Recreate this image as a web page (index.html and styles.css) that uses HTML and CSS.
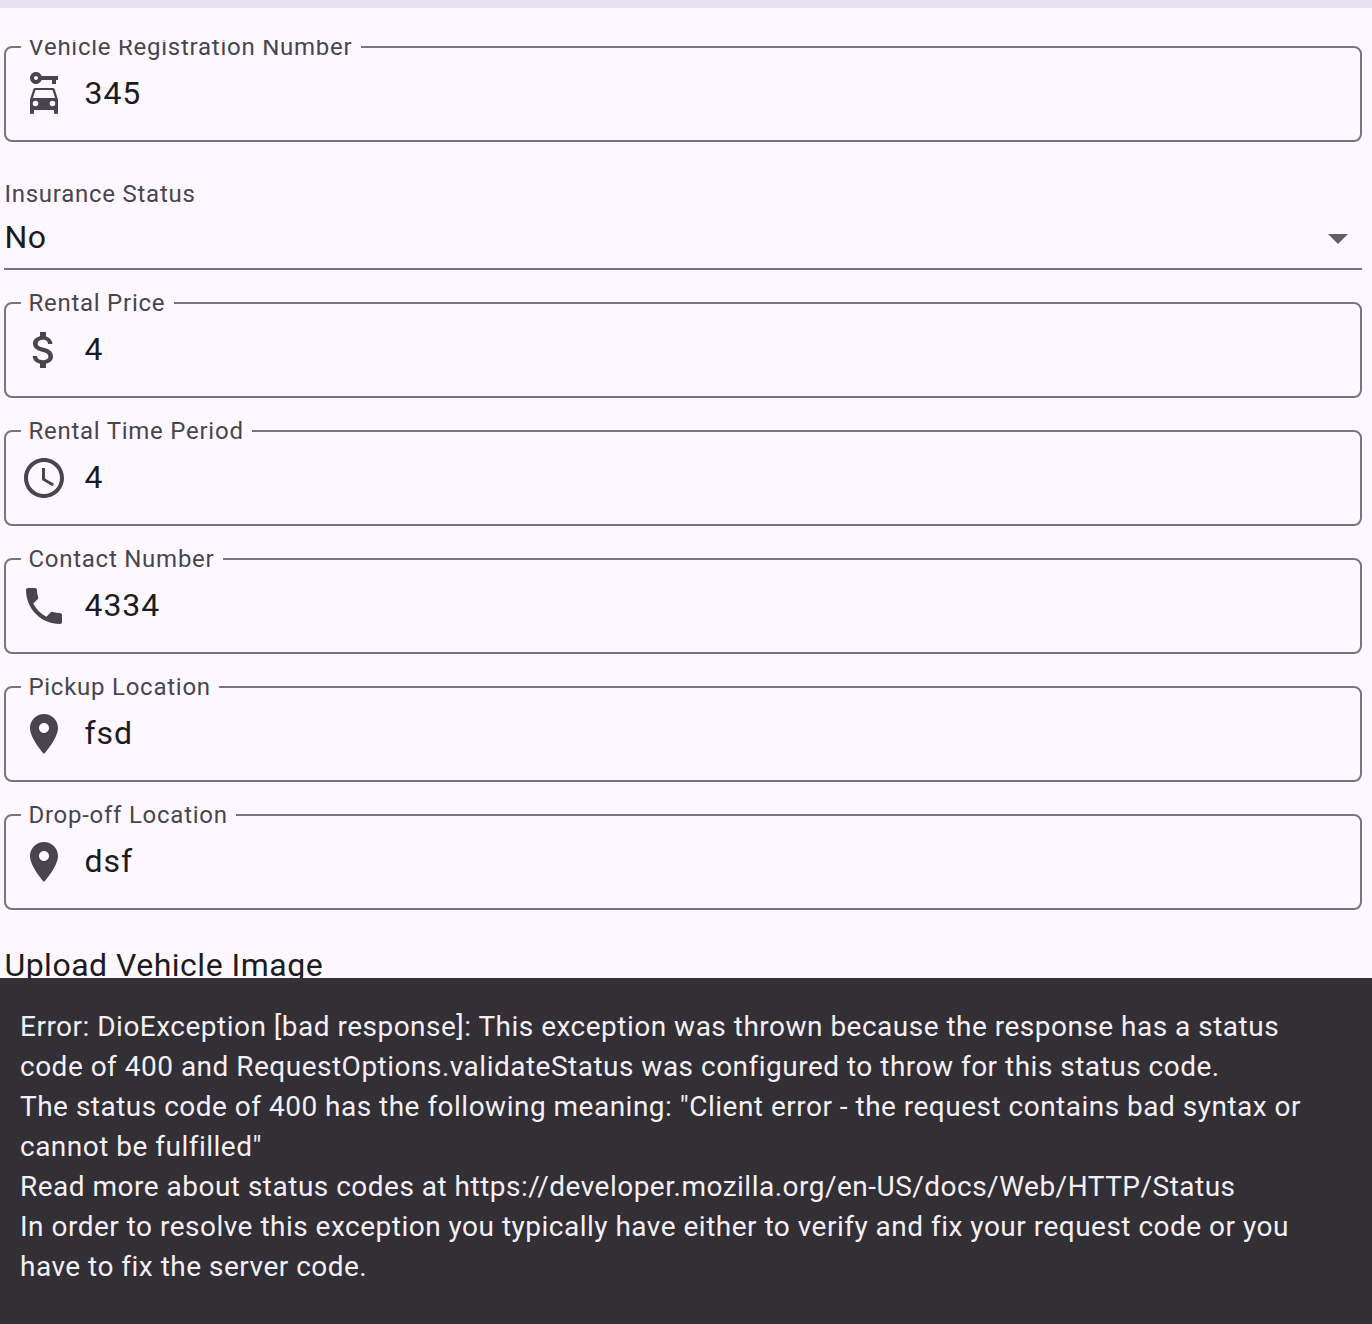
FILE: index.html
```html
<!DOCTYPE html>
<html lang="en">
<head>
<meta charset="utf-8">
<title>Vehicle Rental Form</title>
<link rel="stylesheet" href="styles.css">
</head>
<body>
<div class="app-bar-edge"></div>
<main class="form-viewport">
  <form class="form">
    <fieldset class="field">
      <legend>Vehicle Registration Number</legend>
      <div class="field-row">
        <svg class="icon" viewBox="0 0 24 24"><path fill-rule="evenodd" d="M10.83 3C10.41 1.83 9.3 1 8 1 6.34 1 5 2.34 5 4c0 1.65 1.34 3 3 3 1.3 0 2.41-.84 2.83-2H16v2h2V5h1V3h-8.17zM8 5c-.55 0-1-.45-1-1s.45-1 1-1 1 .45 1 1-.45 1-1 1zM16.39 9H7.61c-.43 0-.81.28-.95.68L5 14.69v6.5c0 .45.35.81.78.81h.44c.43 0 .78-.36.78-.81V20h10v1.19c0 .44.34.81.78.81h.44c.43 0 .78-.36.78-.81v-6.5l-1.66-5.01c-.14-.4-.52-.68-.95-.68zM7.78 10h8.44l1.34 4H6.44l1.34-4zM7.75 18.15a1.4 1.4 0 1 1 0-2.8a1.4 1.4 0 1 1 0 2.8zM16.25 18.15a1.4 1.4 0 1 1 0-2.8a1.4 1.4 0 1 1 0 2.8z"/></svg>
        <span class="value">345</span>
      </div>
    </fieldset>
    <div class="dropdown">
      <span class="dropdown-label">Insurance Status</span>
      <div class="dropdown-row">
        <span class="value">No</span>
        <svg class="icon icon-arrow" viewBox="0 0 24 24"><path d="M7 10l5 5 5-5z"/></svg>
      </div>
    </div>
    <fieldset class="field">
      <legend>Rental Price</legend>
      <div class="field-row">
        <svg class="icon" viewBox="0 0 24 24"><path d="M11.8 10.9c-2.27-.59-3-1.2-3-2.15 0-1.09 1.01-1.85 2.7-1.85 1.78 0 2.44.85 2.5 2.1h2.21c-.07-1.72-1.12-3.3-3.21-3.81V3h-3v2.16c-1.94.42-3.5 1.68-3.5 3.61 0 2.31 1.91 3.46 4.7 4.13 2.5.6 3 1.48 3 2.41 0 .69-.49 1.79-2.7 1.79-2.06 0-2.87-.92-2.98-2.1h-2.2c.12 2.19 1.76 3.42 3.68 3.83V21h3v-2.15c1.95-.37 3.5-1.5 3.5-3.55 0-2.84-2.43-3.81-4.7-4.4z"/></svg>
        <span class="value">4</span>
      </div>
    </fieldset>
    <fieldset class="field">
      <legend>Rental Time Period</legend>
      <div class="field-row">
        <svg class="icon" viewBox="0 0 24 24"><path d="M11.99 2C6.47 2 2 6.48 2 12s4.47 10 9.99 10C17.52 22 22 17.52 22 12S17.52 2 11.99 2zM12 20c-4.42 0-8-3.58-8-8s3.58-8 8-8 8 3.58 8 8-3.58 8-8 8zm.5-13H11v6l5.25 3.15.75-1.23-4.5-2.67z"/></svg>
        <span class="value">4</span>
      </div>
    </fieldset>
    <fieldset class="field">
      <legend>Contact Number</legend>
      <div class="field-row">
        <svg class="icon" viewBox="0 0 24 24"><path d="M6.62 10.79c1.44 2.83 3.76 5.14 6.59 6.59l2.2-2.2c.27-.27.67-.36 1.02-.24 1.12.37 2.33.57 3.57.57.55 0 1 .45 1 1V20c0 .55-.45 1-1 1-9.39 0-17-7.61-17-17 0-.55.45-1 1-1h3.5c.55 0 1 .45 1 1 0 1.25.2 2.45.57 3.57.11.35.03.74-.25 1.02l-2.2 2.2z"/></svg>
        <span class="value">4334</span>
      </div>
    </fieldset>
    <fieldset class="field">
      <legend>Pickup Location</legend>
      <div class="field-row">
        <svg class="icon" viewBox="0 0 24 24"><path d="M12 2C8.13 2 5 5.13 5 9c0 5.25 7 13 7 13s7-7.75 7-13c0-3.87-3.13-7-7-7zm0 9.5c-1.38 0-2.5-1.12-2.5-2.5s1.12-2.5 2.5-2.5 2.5 1.12 2.5 2.5-1.12 2.5-2.5 2.5z"/></svg>
        <span class="value">fsd</span>
      </div>
    </fieldset>
    <fieldset class="field">
      <legend>Drop-off Location</legend>
      <div class="field-row">
        <svg class="icon" viewBox="0 0 24 24"><path d="M12 2C8.13 2 5 5.13 5 9c0 5.25 7 13 7 13s7-7.75 7-13c0-3.87-3.13-7-7-7zm0 9.5c-1.38 0-2.5-1.12-2.5-2.5s1.12-2.5 2.5-2.5 2.5 1.12 2.5 2.5-1.12 2.5-2.5 2.5z"/></svg>
        <span class="value">dsf</span>
      </div>
    </fieldset>
    <div class="upload-title">Upload Vehicle Image</div>
  </form>
</main>
<div class="snackbar" role="alert">
  <p>Error: DioException [bad response]: This exception was thrown because the response has a status<br>code of 400 and RequestOptions.validateStatus was configured to throw for this status code.</p>
  <p>The status code of 400 has the following meaning: "Client error - the request contains bad syntax or<br>cannot be fulfilled"</p>
  <p>Read more about status codes at https://developer.mozilla.org/en-US/docs/Web/HTTP/Status</p>
  <p>In order to resolve this exception you typically have either to verify and fix your request code or you<br>have to fix the server code.</p>
</div>
</body>
</html>
```
FILE: styles.css
```css
* { box-sizing: border-box; }

body {
  margin: 0;
  height: 1324px;
  display: flex;
  flex-direction: column;
  overflow: hidden;
  background: #fdf8ff;
  color: #1c1b20;
  font-family: Roboto, "Liberation Sans", sans-serif;
  font-size: 32px;
  letter-spacing: 1px;
}

.app-bar-edge {
  flex: none;
  height: 8px;
  background: #e5e1ee;
}

.form-viewport {
  flex: none;
  height: 938px;
  margin-top: 32px;
  padding: 0 10px 0 4px;
  overflow: hidden;
}

.form {
  display: flex;
  flex-direction: column;
  gap: 19px;
  margin-top: -7px;
}

.field {
  min-width: 0;
  height: 109px;
  margin: 0;
  padding: 0 14px 13px;
  border: 2px solid #79757f;
  border-radius: 8px;
}

.field legend {
  height: 28px;
  margin-left: 1px;
  padding: 0 8.5px 0 7.4px;
  color: #48454e;
  font-size: 24px;
  line-height: 28px;
  letter-spacing: 0.75px;
  white-space: nowrap;
}

.field-row {
  display: flex;
  align-items: center;
  gap: 16.4px;
  height: 66px;
}

.icon {
  flex: none;
  width: 48px;
  height: 48px;
  fill: #48454e;
}

.value {
  padding-bottom: 2px;
  line-height: 48px;
}

.dropdown {
  display: flex;
  flex-direction: column;
  height: 109px;
  padding-top: 19px;
  border-bottom: 2px solid #79757f;
}

.dropdown-label {
  padding-left: 0.4px;
  color: #48454e;
  font-size: 24px;
  line-height: 28px;
  letter-spacing: 0.75px;
}

.dropdown-row {
  display: flex;
  align-items: center;
  justify-content: space-between;
  height: 60px;
  padding-left: 0.4px;
  letter-spacing: 0.5px;
}

.icon-arrow { fill: #616161; }

.upload-title {
  padding: 12px 0 0 0.4px;
  line-height: 48px;
  letter-spacing: 0.5px;
}

.snackbar {
  flex: 1;
  padding: 29px 20px 15px;
  background: #322f35;
  color: #f4eff7;
  font-size: 28px;
  line-height: 40px;
  letter-spacing: 0.49px;
  white-space: nowrap;
}

.snackbar p { margin: 0; }
```
